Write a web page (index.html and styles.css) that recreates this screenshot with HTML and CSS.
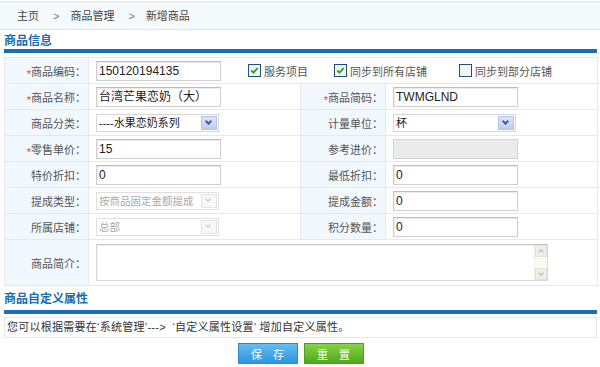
FILE: index.html
```html
<!DOCTYPE html>
<html lang="zh-CN">
<head>
<meta charset="utf-8">
<title>新增商品</title>
<link rel="stylesheet" href="styles.css">
</head>
<body>
<div class="crumb">
  <span>主页</span><span class="sep">&gt;</span><span>商品管理</span><span class="sep">&gt;</span><span>新增商品</span>
</div>
<div class="wrap">
  <h2 class="title">商品信息</h2>
  <table class="form">
    <colgroup><col class="c1"><col class="c2"><col class="c3"><col class="c4"></colgroup>
    <tr>
      <td class="lbl"><i class="star">*</i>商品编码：</td>
      <td colspan="3" class="fld">
        <div class="line">
          <span class="ipt">150120194135</span>
          <label class="chk ck1"><svg class="box" width="13" height="13" viewBox="0 0 13 13"><rect x="0.5" y="0.5" width="12" height="12" fill="#f4f4f0" stroke="#1f4f7c"/><path d="M3.2 6.4 L5.4 8.6 L9.8 4" fill="none" stroke="#22a422" stroke-width="1.8"/></svg>服务项目</label>
          <label class="chk ck2"><svg class="box" width="13" height="13" viewBox="0 0 13 13"><rect x="0.5" y="0.5" width="12" height="12" fill="#f4f4f0" stroke="#1f4f7c"/><path d="M3.2 6.4 L5.4 8.6 L9.8 4" fill="none" stroke="#22a422" stroke-width="1.8"/></svg>同步到所有店铺</label>
          <label class="chk"><svg class="box" width="13" height="13" viewBox="0 0 13 13"><rect x="0.5" y="0.5" width="12" height="12" fill="#f4f4f0" stroke="#1f4f7c"/></svg>同步到部分店铺</label>
        </div>
      </td>
    </tr>
    <tr>
      <td class="lbl"><i class="star">*</i>商品名称：</td>
      <td class="fld"><span class="ipt">台湾芒果恋奶（大）</span></td>
      <td class="lbl"><i class="star">*</i>商品简码：</td>
      <td class="fld"><span class="ipt">TWMGLND</span></td>
    </tr>
    <tr>
      <td class="lbl">商品分类：</td>
      <td class="fld"><span class="sel"><span class="val">----水果恋奶系列</span><span class="arr"></span></span></td>
      <td class="lbl">计量单位：</td>
      <td class="fld"><span class="sel"><span class="val">杯</span><span class="arr"></span></span></td>
    </tr>
    <tr>
      <td class="lbl"><i class="star">*</i>零售单价：</td>
      <td class="fld"><span class="ipt">15</span></td>
      <td class="lbl">参考进价：</td>
      <td class="fld"><span class="ipt off"></span></td>
    </tr>
    <tr>
      <td class="lbl">特价折扣：</td>
      <td class="fld"><span class="ipt">0</span></td>
      <td class="lbl">最低折扣：</td>
      <td class="fld"><span class="ipt">0</span></td>
    </tr>
    <tr>
      <td class="lbl">提成类型：</td>
      <td class="fld"><span class="sel dis"><span class="val">按商品固定金额提成</span><span class="arr"></span></span></td>
      <td class="lbl">提成金额：</td>
      <td class="fld"><span class="ipt">0</span></td>
    </tr>
    <tr>
      <td class="lbl">所属店铺：</td>
      <td class="fld"><span class="sel dis"><span class="val">总部</span><span class="arr"></span></span></td>
      <td class="lbl">积分数量：</td>
      <td class="fld"><span class="ipt">0</span></td>
    </tr>
    <tr class="tall">
      <td class="lbl">商品简介：</td>
      <td colspan="3" class="fld">
        <div class="area"><div class="txt"></div><div class="bar"><span class="up"></span><span class="dn"></span></div></div>
      </td>
    </tr>
  </table>
  <h2 class="title t2">商品自定义属性</h2>
  <div class="note">您可以根据需要在‘系统管理’---&gt;&nbsp; ‘自定义属性设置’ 增加自定义属性。</div>
  <div class="btns">
    <button class="btn save">保　存</button>
    <button class="btn reset">重　置</button>
  </div>
</div>
</body>
</html>
```
FILE: styles.css
```css
body{
  margin:0;
  font-family:"Liberation Sans","Noto Sans CJK SC",sans-serif;
  font-size:11px;
  color:#555;
  background:#fff;
}
.crumb{
  margin-top:1px;
  height:26px;
  line-height:26px;
  border-top:2px solid #eceff2;
  border-bottom:1px solid #e2e5e8;
  background:#f5fafe;
  padding-left:17px;
  font-size:11px;
  color:#444;
}
.crumb .sep{
  margin:0 11px 0 14px;
  color:#777;
  font-family:"Liberation Sans",sans-serif;
}
.wrap{
  padding:0 3px 0 4px;
}
.title{
  margin:0;
  padding-top:3px;
  padding-bottom:1px;
  line-height:16px;
  font-size:12px;
  font-weight:bold;
  color:#1a6db3;
  border-bottom:3px solid #1c6fb6;
  box-shadow:inset 0 -1px 0 #1c6fb6;
}
.t2{
  padding-top:5px;
  padding-bottom:4px;
}
.form{
  margin-top:4px;
  width:593px;
  border-collapse:collapse;
  table-layout:fixed;
}
.c1{width:84px;}
.c2{width:212px;}
.c3{width:85px;}
.c4{width:212px;}
.form td{
  border:1px solid #e6e9ec;
  height:25px;
  padding:0;
}
.form .lbl{
  background:#f1f8fe;
  text-align:right;
  padding-right:2px;
  color:#555;
  white-space:nowrap;
}
.star{
  font-style:normal;
  color:#e2441c;
  font-size:11px;
  position:relative;
  top:2px;
}
.form .fld{
  padding-left:7px;
}
.tall td{
  height:45px;
}
.line{
  display:flex;
  align-items:center;
}
.ipt{
  display:block;
  box-sizing:border-box;
  width:125px;
  height:20px;
  line-height:18px;
  border:1px solid #cfcfcf;
  border-top-color:#bdbdbd;
  box-shadow:inset 1px 1px 0 #ececec;
  padding-left:2px;
  font-size:12px;
  color:#222;
  background:#fff;
  white-space:nowrap;
}
.ipt.off{
  background:#ebebeb;
  border-color:#d3d3d3;
}
.chk{
  display:flex;
  align-items:center;
  color:#555;
}
.ck1{margin-left:27px;margin-right:26px;}
.ck2{margin-right:32px;}
.box{
  display:block;
  margin-right:3px;
}
.sel{
  display:flex;
  box-sizing:border-box;
  width:123px;
  height:18px;
  border:1px solid #d6d6d6;
  background:#fff;
  color:#222;
  font-size:11px;
}
.sel .val{
  flex:1;
  line-height:16px;
  padding-left:2px;
  white-space:nowrap;
  overflow:hidden;
}
.sel .arr{
  box-sizing:border-box;
  width:16px;
  margin:1px;
  border:1px solid #b2c4ee;
  background:linear-gradient(#dbe5fb,#bccdf4);
  position:relative;
}
.sel .arr::after{
  content:"";
  position:absolute;
  left:4px;
  top:2px;
  width:3px;
  height:3px;
  border:solid #4c5f86;
  border-width:0 2px 2px 0;
  transform:rotate(45deg);
}
.sel.dis{
  color:#aaa;
  border-color:#e0e0e0;
  font-size:10.5px;
}
.sel.dis .arr{
  border-color:#e3e3e3;
  background:#f7f7f7;
}
.sel.dis .arr::after{
  border-color:#c4c4c4;
  border-width:0 1px 1px 0;
}
.area{
  display:flex;
  box-sizing:border-box;
  width:452px;
  height:37px;
  border:1px solid #d8d8d8;
  border-top-color:#c8c8c8;
  box-shadow:inset 1px 1px 0 #ededed;
}
.area .txt{
  flex:1;
}
.area .bar{
  width:12px;
  display:flex;
  flex-direction:column;
  justify-content:space-between;
  background:#fbfbf6;
  border-left:1px solid #eee;
}
.bar span{
  height:12px;
  background:#efefe8;
  border:1px solid #e2e2da;
  box-sizing:border-box;
  position:relative;
}
.bar span::after{
  content:"";
  position:absolute;
  left:3px;
  width:3px;
  height:3px;
  border:solid #b5b5a8;
  border-width:1px 0 0 1px;
}
.bar .up::after{top:4px;transform:rotate(45deg);}
.bar .dn::after{top:2px;transform:rotate(225deg);}
.note{
  margin-top:3px;
  height:19px;
  line-height:19px;
  border:1px solid #e6e6e6;
  padding-left:2px;
  color:#333;
  font-size:11px;
  letter-spacing:0.25px;
}
.btns{
  margin-top:5px;
  display:flex;
  justify-content:center;
  gap:6px;
}
.btn{
  width:60px;
  height:21px;
  border:1px solid #2b8bd0;
  padding:0;
  color:#fff;
  font-family:"Noto Sans CJK SC",sans-serif;
  font-size:11px;
  background:linear-gradient(#65bdf3,#2d95de);
}
.btn.reset{
  border-color:#4e9e23;
  background:linear-gradient(#86d444,#4ea81f);
}
```
